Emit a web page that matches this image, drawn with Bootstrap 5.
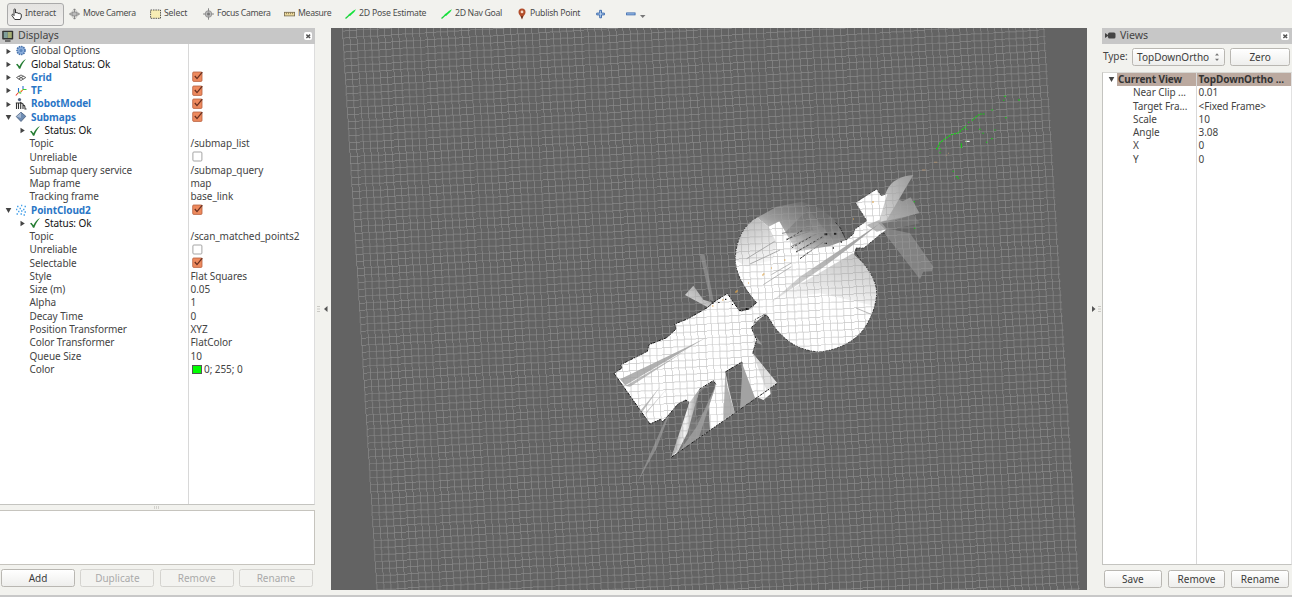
<!DOCTYPE html>
<html lang="en">
<head>
<meta charset="utf-8">
<title>RViz</title>
<link rel="stylesheet" href="https://cdn.jsdelivr.net/npm/bootstrap@5.3.0/dist/css/bootstrap.min.css">
<style>
body{width:1292px;height:597px;overflow:hidden;background:#f2f2ee;font-family:"Noto Sans","Open Sans",sans-serif;font-size:10px;line-height:13.28px;color:#444;letter-spacing:-.07px}
svg{display:block;flex:none}
.toolbar{height:28px;padding-left:7px;font-size:8.7px;letter-spacing:-.32px;color:#4c4c4c}
.tool{gap:3px;height:23px}
.tool svg{width:11px;height:12px}
.tool:nth-child(1){width:57px;border:1px solid #aaa;border-radius:3px;background:linear-gradient(#e4e3e1,#f0efed);margin-right:5px;padding-left:3px;gap:3px;letter-spacing:-.1px}
.tool:nth-child(2){width:81px}.tool:nth-child(3){width:53px;letter-spacing:-.15px}.tool:nth-child(4){width:81px}.tool:nth-child(5){width:61px}
.tool:nth-child(6){width:96px;letter-spacing:-.22px}.tool:nth-child(7){width:76px}.tool:nth-child(8){width:79px;gap:2px;letter-spacing:-.25px}.tool:nth-child(9){width:30px}
.leftdock{width:315px}
.rightdock{width:190px}
.dockhead{height:15.5px;background:#c7c7c7;font-size:10.6px;padding:0 3px 0 2px}
.closer{width:8.5px;height:8.5px;background:#fff;border-radius:2px}
.tree{background:#fff;border-right:1px solid #ddd;border-bottom:1px solid #c4c4c0;padding-top:.9px}
.trow{height:13.28px;white-space:nowrap}
.pname{width:188.5px;border-right:1px solid #d8d8d8;height:100%}
.pval{padding-left:2px}
.dark{color:#111}
.disp{color:#2a76c6;font-weight:700}
.exp{width:7px;margin-left:5px;margin-right:3px;height:7px}
.ic{width:12px;height:12px;margin-right:4px}
.ind1{padding-left:13.5px}
.ind1 .ic{margin-right:3.5px;margin-left:.5px}
.leaf{padding-left:29.5px}
.chk{width:11px;height:11px;margin-left:1px;margin-top:.5px}
.swatch{width:10px;height:9px;background:#0f0;border:1px solid #555;margin-left:1px;margin-right:2.5px}
.handle{height:5px}
.descr{height:55px;background:#fff;border:1px solid #c6c4be;border-left:0}
.btn.rvb{--bs-btn-padding-x:0;--bs-btn-padding-y:0;--bs-btn-font-size:10px;--bs-btn-line-height:1;--bs-btn-border-radius:2.5px;height:18px;color:#3c3c3c;border:1px solid #b9b7b2;background:linear-gradient(#fff,#eeeeec);letter-spacing:0}
.btn.rvb:disabled{color:#aaa;border-color:#d4d3cf;background:#f3f3f0;opacity:1}
.lbtns{height:30.5px;padding:4px 2px 0 1px;gap:5.2px}
.lbtns .btn{width:74.3px}
.rbtns{padding:5px 3px 0 2px;height:30px;gap:6px}
.rbtns .btn{width:58px}
.scene{width:756px;height:562px;background:#636363}
.typebar{height:28px;padding:0 2px 1px 1px;font-size:10px}
.typebox{width:93px;margin-left:4.5px;margin-right:5px}
.vtree{border-left:1px solid #c4c4c0;border-right:1px solid #e2e2e2;border-top:1px solid #d8d8d4}
.vtree .pname{width:93.5px;overflow:hidden}
.vtree .leaf{padding-left:30px}
.vtree .curname{width:79.5px;padding-left:1px}
.vtree .exp{margin-top:3px;margin-right:2px}
.vsel{background:#bba99f;color:#333;font-weight:700;height:13px}
.arrowcol{width:16px;padding-bottom:4px}
.arrowcol.narrow{width:15px}
.mainrow{height:567px}
.statusline{height:2px;background:#c8c8c8}
</style>
</head>
<body class="d-flex flex-column">
<svg width="0" height="0" class="position-absolute">
<defs>
<symbol id="right" viewBox="0 0 7 7"><path d="M1.5.8 5.800 3.500 1.500 6.200z" fill="#444"/></symbol>
<symbol id="down" viewBox="0 0 7 7"><path d="M.7 1h5.600L3.500 6z" fill="#444"/></symbol>
<symbol id="check" viewBox="0 0 12 12"><path d="M1 6.600 2.500 5.800 4.400 8.300C6 5 8 2.400 11 1 8.500 3.800 6.700 6.900 5.300 10.700H4C3.200 9 2.200 7.800 1 6.600z" fill="#257d33"/></symbol>
<symbol id="on" viewBox="0 0 11 11"><rect x=".7" y="1" width="9.300" height="9.400" rx="1" fill="#ee8a5e" stroke="#b5603f" stroke-width=".8"/><path d="M2.800 5 5 7.600 10.300 1.200" fill="none" stroke="#6a3020" stroke-width="1.300"/></symbol>
<symbol id="off" viewBox="0 0 11 11"><rect x=".9" y="1" width="9" height="9" rx="1" fill="#fff" stroke="#9b9b9b" stroke-width=".9"/></symbol>
<symbol id="x" viewBox="0 0 9 9"><path d="m2.500 2.800 4 3.600m0-3.600-4 3.600" stroke="#555" stroke-width="1.500"/></symbol>
<symbol id="arrow" viewBox="0 0 11 11"><path d="M.5 10 5.500 5.500" stroke="#1bd13a" stroke-width="1.300"/><path d="M3.500 6.300 8.200 2.300 11 .8 9.300 3.400 5 7.600z" fill="#14e23a"/></symbol>
</defs>
</svg>

<nav class="toolbar d-flex align-items-center">
<div class="tool d-flex align-items-center"><svg viewBox="0 0 11 12"><path d="M3 7V1.700C3 .6 4.500.6 4.500 1.700V5c0-.8 1.600-.8 1.600.2 0-.7 1.500-.6 1.500.4 0-.7 1.500-.5 1.500.5 0-.6 1.200-.5 1.200.5V9L9.200 11.500H3.800L1 7.600C.5 6.500 1.500 6 2 6.500L3 7.600z" fill="#fff" stroke="#222" stroke-width=".9"/></svg>Interact</div>
<div class="tool d-flex align-items-center"><svg viewBox="0 0 11 12"><path d="M5.500 1v10M.7 6h9.600M4 2.500 5.500.8 7 2.500M4 9.500l1.500 1.700L7 9.500M2 4.500.6 6 2 7.500M9 4.500 10.400 6 9 7.500" fill="none" stroke="#777" stroke-width=".8"/><rect x="3" y="4" width="5" height="4" fill="#bbb" stroke="#777" stroke-width=".7"/></svg>Move Camera</div>
<div class="tool d-flex align-items-center"><svg viewBox="0 0 11 12"><rect x=".6" y="2" width="9.900" height="8.300" fill="#f7edb4" stroke="#444" stroke-width=".9" stroke-dasharray="1.500 .9"/></svg>Select</div>
<div class="tool d-flex align-items-center"><svg viewBox="0 0 11 12"><circle cx="5.500" cy="6" r="3.300" fill="#bbb" stroke="#999"/><path d="M5.500.3V3.500M5.500 8.500v3.200M0 6h3M8 6h3" stroke="#888"/><circle cx="5.500" cy="6" r="1.500" fill="#777"/></svg>Focus Camera</div>
<div class="tool d-flex align-items-center"><svg viewBox="0 0 11 12"><rect x=".4" y="4.300" width="10.200" height="3.600" fill="#f0dda0" stroke="#75684a" stroke-width=".8"/><path d="M2.500 4.500v1.700m2-1.700v1.700m2-1.700v1.700m2-1.700v1.700" stroke="#75684a" stroke-width=".7"/></svg>Measure</div>
<div class="tool d-flex align-items-center"><svg><use href="#arrow"/></svg>2D Pose Estimate</div>
<div class="tool d-flex align-items-center"><svg><use href="#arrow"/></svg>2D Nav Goal</div>
<div class="tool d-flex align-items-center"><svg viewBox="0 0 11 12"><path d="M5 11.500C4.300 8 1.500 7 1.500 4a3.500 3.500 0 0 1 7 0C8.500 7 5.700 8 5 11.500z" fill="#b24e2c"/><path d="M4 8.300 5 11.500 6 8.300z" fill="#552418"/><circle cx="5" cy="3.900" r="1.400" fill="#f7d9c8"/></svg>Publish Point</div>
<div class="tool d-flex align-items-center"><svg viewBox="0 0 11 12"><path d="M3.700 2.300h1.800v2.800h2.900v1.800H5.500v2.900H3.700V6.900H.7V5.100h3z" fill="#b5cfee" stroke="#3363a8" stroke-width=".9"/></svg></div>
<div class="tool d-flex align-items-center"><svg viewBox="0 0 11 12"><rect x=".6" y="4.900" width="8.500" height="2" fill="#9fc0ea" stroke="#3363a8" stroke-width=".8"/></svg><svg viewBox="0 0 11 12"><path d="M0 7h5.500L2.700 10z" fill="#777"/></svg></div>
</nav>

<main class="mainrow d-flex">
<aside class="leftdock d-flex flex-column">
<div class="dockhead d-flex align-items-center"><svg width="12" height="12" viewBox="0 0 12 12" class="me-1"><rect x=".2" y=".8" width="11" height="8.700" rx=".8" fill="#333"/><rect x="1.700" y="2" width="4.100" height="6" fill="#7f9e9a"/><rect x="5.800" y="2" width="4" height="6" fill="#a6ae74"/><path d="M3 11h5.500" stroke="#333" stroke-width="1.200"/></svg><span class="flex-grow-1">Displays</span><svg class="closer" viewBox="0 0 9 9"><use href="#x"/></svg></div>
<section class="tree flex-grow-1 d-flex flex-column">
<div class="trow d-flex"><div class="pname d-flex align-items-center"><svg class="exp"><use href="#right"/></svg><svg class="ic" viewBox="0 0 12 12"><circle cx="6" cy="5.500" r="4" fill="#8aaddb" stroke="#4a74ac" stroke-width="1.600" stroke-dasharray="1.500 .8"/><circle cx="6" cy="5.500" r="1.500" fill="#5b86bd"/></svg>Global Options</div></div>
<div class="trow d-flex dark"><div class="pname d-flex align-items-center"><svg class="exp"><use href="#right"/></svg><svg class="ic"><use href="#check"/></svg>Global Status: Ok</div></div>
<div class="trow d-flex"><div class="pname d-flex align-items-center disp"><svg class="exp"><use href="#right"/></svg><svg class="ic" viewBox="0 0 12 12"><path d="M1.500 5.500 6 3l4.800 2.500L6 8.500zM3.700 4.300l4.800 2.700M8.500 4.200 3.700 7" fill="none" stroke="#555" stroke-width=".9"/></svg>Grid</div><div class="pval"><svg class="chk"><use href="#on"/></svg></div></div>
<div class="trow d-flex"><div class="pname d-flex align-items-center disp"><svg class="exp"><use href="#right"/></svg><svg class="ic" viewBox="0 0 12 12"><path d="M3.500 7.500V3M8 4.500V1" stroke="#2775d0" stroke-width="1.100"/><path d="M3.500 7.500.8 10.500M8 4.500 5.800 7" stroke="#f03a2c" stroke-width="1.100"/><path d="m3.500 7.500 2.700.6M8 4.500h3.500" stroke="#39d13c" stroke-width="1.200"/><path d="M3.500 7.500 8 4.500" stroke="#e2c535" stroke-width=".8"/></svg>TF</div><div class="pval"><svg class="chk"><use href="#on"/></svg></div></div>
<div class="trow d-flex"><div class="pname d-flex align-items-center disp"><svg class="exp"><use href="#right"/></svg><svg class="ic" viewBox="0 0 12 12"><circle cx="4.500" cy="1.600" r="1.600" fill="#53617e"/><path d="M1.500 11V5M3.500 11V4.500M5.700 11V4.500L8 6v5M8 7.500c2-.5 2 1 2 3.500h1.500M.8 5h6" fill="none" stroke="#333" stroke-width="1.100"/></svg>RobotModel</div><div class="pval"><svg class="chk"><use href="#on"/></svg></div></div>
<div class="trow d-flex"><div class="pname d-flex align-items-center disp"><svg class="exp"><use href="#down"/></svg><svg class="ic" viewBox="0 0 12 12"><path d="M6 1.200 10.800 5.300 6 10.500 1.200 5.500z" fill="#6e8cb3" stroke="#455a78" stroke-width=".8"/><path d="M6 1.500 1.500 5.500 6 7z" fill="#a5b8d2"/></svg>Submaps</div><div class="pval"><svg class="chk"><use href="#on"/></svg></div></div>
<div class="trow d-flex dark"><div class="pname d-flex align-items-center ind1"><svg class="exp"><use href="#right"/></svg><svg class="ic"><use href="#check"/></svg>Status: Ok</div></div>
<div class="trow d-flex"><div class="pname leaf">Topic</div><div class="pval">/submap_list</div></div>
<div class="trow d-flex"><div class="pname leaf">Unreliable</div><div class="pval"><svg class="chk"><use href="#off"/></svg></div></div>
<div class="trow d-flex"><div class="pname leaf">Submap query service</div><div class="pval">/submap_query</div></div>
<div class="trow d-flex"><div class="pname leaf">Map frame</div><div class="pval">map</div></div>
<div class="trow d-flex"><div class="pname leaf">Tracking frame</div><div class="pval">base_link</div></div>
<div class="trow d-flex"><div class="pname d-flex align-items-center disp"><svg class="exp"><use href="#down"/></svg><svg class="ic" viewBox="0 0 12 12"><path d="M2 2.500h1.500M6 1.500h1.300M9.500 2.500H11M1 5.500h1.300M4.500 4.500H6M8 5.500h1.500M3 7.500h1.500M6 7h1.500M9.500 8H11M1.500 10H3M5.500 10H7M8.500 11H10" stroke="#4aa3ea" stroke-width="1.400"/></svg>PointCloud2</div><div class="pval"><svg class="chk"><use href="#on"/></svg></div></div>
<div class="trow d-flex dark"><div class="pname d-flex align-items-center ind1"><svg class="exp"><use href="#right"/></svg><svg class="ic"><use href="#check"/></svg>Status: Ok</div></div>
<div class="trow d-flex"><div class="pname leaf">Topic</div><div class="pval">/scan_matched_points2</div></div>
<div class="trow d-flex"><div class="pname leaf">Unreliable</div><div class="pval"><svg class="chk"><use href="#off"/></svg></div></div>
<div class="trow d-flex"><div class="pname leaf">Selectable</div><div class="pval"><svg class="chk"><use href="#on"/></svg></div></div>
<div class="trow d-flex"><div class="pname leaf">Style</div><div class="pval">Flat Squares</div></div>
<div class="trow d-flex"><div class="pname leaf">Size (m)</div><div class="pval">0.05</div></div>
<div class="trow d-flex"><div class="pname leaf">Alpha</div><div class="pval">1</div></div>
<div class="trow d-flex"><div class="pname leaf">Decay Time</div><div class="pval">0</div></div>
<div class="trow d-flex"><div class="pname leaf">Position Transformer</div><div class="pval">XYZ</div></div>
<div class="trow d-flex"><div class="pname leaf">Color Transformer</div><div class="pval">FlatColor</div></div>
<div class="trow d-flex"><div class="pname leaf">Queue Size</div><div class="pval">10</div></div>
<div class="trow d-flex"><div class="pname leaf">Color</div><div class="pval d-flex align-items-center"><span class="swatch"></span>0; 255; 0</div></div>
<div class="pname flex-grow-1"></div>
</section>
<div class="handle d-flex justify-content-center align-items-center"><svg width="7" height="3"><path d="M.5 0v3m2-3v3m2-3v3" stroke="#d3d2cd"/></svg></div>
<div class="descr"></div>
<div class="lbtns d-flex"><button class="btn rvb">Add</button><button class="btn rvb" disabled>Duplicate</button><button class="btn rvb" disabled>Remove</button><button class="btn rvb" disabled>Rename</button></div>
</aside>

<div class="arrowcol d-flex align-items-center justify-content-center"><svg width="14" height="9" viewBox="0 0 14 9"><path d="M1 1.500h3m-3 2.500h3m-3 2.500h3" stroke="#c0bfba" stroke-width=".8"/><path d="M11.500 1v6L8 4z" fill="#555"/></svg></div>

<svg class="scene" viewBox="331 28 756 562">
<defs>
<linearGradient id="fade" x1="0" y1="0" x2="0" y2="1"><stop offset="0" stop-color="#fff"/><stop offset="1" stop-color="#fff" stop-opacity=".35"/></linearGradient>
<linearGradient id="spoke" x1=".7" y1="0" x2=".3" y2="1"><stop offset="0" stop-color="#fff"/><stop offset=".5" stop-color="#eee"/><stop offset="1" stop-color="#aaa"/></linearGradient>
<linearGradient id="rib" x1="0" y1=".4" x2="1" y2=".6"><stop offset="0" stop-color="#8a8a8a"/><stop offset=".5" stop-color="#f4f4f4"/><stop offset="1" stop-color="#7a7a7a"/></linearGradient>
<linearGradient id="haze" gradientUnits="userSpaceOnUse" x1="220" y1="275" x2="290" y2="130"><stop offset="0" stop-color="#eee"/><stop offset=".35" stop-color="#aaa" stop-opacity=".85"/><stop offset=".7" stop-color="#888" stop-opacity=".75"/><stop offset="1" stop-color="#777" stop-opacity=".3"/></linearGradient>
<linearGradient id="shade" x1=".8" y1="0" x2=".4" y2="1"><stop offset="0" stop-color="#c4c4c4"/><stop offset=".6" stop-color="#e4e4e4"/><stop offset="1" stop-color="#fff"/></linearGradient>
<linearGradient id="beam" x1="0" y1="1" x2="1" y2="0"><stop offset="0" stop-color="#ccc" stop-opacity=".5"/><stop offset=".5" stop-color="#b4b4b4"/><stop offset="1" stop-color="#999"/></linearGradient>
<linearGradient id="wing" x1="0" y1="1" x2="1" y2="0"><stop offset="0" stop-color="#e0e0e0"/><stop offset="1" stop-color="#999"/></linearGradient>
<linearGradient id="leftlobe" gradientUnits="userSpaceOnUse" x1="100" y1="170" x2="160" y2="320"><stop offset="0" stop-color="#bbb"/><stop offset=".6" stop-color="#e8e8e8"/><stop offset="1" stop-color="#fff"/></linearGradient>
</defs>
<!-- room at the lower left -->
<g transform="translate(600 240) scale(.33333)">
<path d="M112 728 200 530l10-12-40 106z" fill="#8a8a8a"/>
<path d="M255 165 280 137l30 42 32 10-20 12z" fill="url(#wing)"/>
<path d="m300 42 14 4 28 142-12-10z" fill="#858585"/>
<path d="M450 262 486 314l-18-6z" fill="#999"/>
<path d="M42 400 66 384 62 374 142 334 147 314 200 293 228 267 224 252 262 237 322 203 340 187 382 160 418 212 444 208 472 186 500 224 468 240 465 254 454 262 470 300 458 340 532 430 510 446 512 462 490 480 472 472 406 518 214 652 250 560 268 488 258 480 234 492 188 546 182 538 150 552z" fill="#fff"/>
<path d="M268 488 298 448 262 600 214 652z" fill="url(#rib)"/>
<path d="M298 450 340 422 348 434 326 500 330 570 230 641 262 580z" fill="#777"/>
<path d="M296 460 340 424 345 440 318 510 284 545z" fill="#646464"/>
<path d="M348 434 296 595 236 637 290 560z" fill="#aaa" opacity=".65"/>
<path d="M348 420 376 396 404 518 330 570z" fill="url(#fade)"/>
<path d="M376 396 382 440 404 518 370 540z" fill="#9c9c9c" opacity=".8"/>
<path d="M376 396 384 390 425 366 428 374 424 505 404 518 385 440z" fill="#666"/>
<path d="m428 374 38 102-46 32z" fill="#a2a2a2"/>
<path d="M458 340 532 430 500 452z" fill="#ccc" opacity=".6"/>
<path d="M60 418 280 312 320 292 76 436z" fill="#b0b0b0"/>
<path d="M76 438 260 330l-170 110zM124 520l58-82-64 78zM132 528l74-88-64 72z" fill="#bbb"/>
<path d="M42 400 66 384 62 374 142 334 147 314 200 293 228 267 224 252 262 237 322 203 340 187 382 160 418 212 444 208 472 186M500 224 468 240 465 254 454 262 470 300 458 340M42 400 150 552 182 538 188 546 234 492 258 480 268 488M298 448 340 422 348 434M376 396 425 366 428 374M532 430 214 652" fill="none" stroke="#161616" stroke-width="3" stroke-dasharray="9 3 4 2"/>
<path d="M335 185h6v6h-6zM375 176h4v4h-4zM354 186h5v3h-5zM396 192h3v3h-3zM436 204h7v6h-7z" fill="#111"/>
</g>
<!-- round hall and the passage to the upper right -->
<g transform="translate(720 160) scale(.33333)">
<path d="M110 174 170 140 245 125 300 145 345 180 378 240 340 275 230 280z" fill="url(#haze)"/>
<path d="m190 222 70-70 20 60zM250 130l90 110-20-90z" fill="#6a6a6a" opacity=".4"/>
<path d="M500 205 490 215 600 358 610 335 636 334 640 320 570 220z" fill="#828282"/>
<path d="m472 192 28-86 48 18 24-12 26 46-96 30z" fill="url(#wing)" opacity=".7"/>
<path d="M465 190 500 92C515 60 545 48 580 45L500 180z" fill="url(#wing)"/>
<path d="M406 128 470 87 484 108 502 102 478 180 500 208 485 220 432 264 408 264 398 290 430 310C455 340 470 370 470 402 466 450 450 480 428 512 400 545 360 568 300 576 260 574 220 560 190 530 155 500 152 475 136 462L104 490 100 440 110 428C75 390 46 340 46 300 46 250 65 200 110 172L146 200 178 184 230 275 330 258 378 240 400 222 404 208 440 182z" fill="#fff"/>
<path d="M46 300C46 250 65 200 110 172L146 200 170 250 160 300 80 320z" fill="url(#leftlobe)"/>
<path d="M160 420 398 280 430 310C455 340 470 370 470 402 464 430 466 440 454 436L300 400z" fill="url(#shade)"/>
<path d="M150 430 240 350 480 190 390 262 310 322 230 376z" fill="url(#beam)"/>
<path d="M474 188 580 165 600 190 500 212z" fill="#7c7c7c" opacity=".7"/>
<path d="M440 195 478 180 500 208 470 215z" fill="#999" opacity=".7"/>
<path d="m186 220 108-20M198 238l102-34M213 260l100-50M228 276l90-48M240 296l70-50" stroke="#888" stroke-width="3" stroke-dasharray="22 3"/>
<path d="M80 296l84-52M90 312l90-42" stroke="#aaa" stroke-width="3"/>
<path d="M200 240 246 212M215 264l60-35M228 276l80-46M240 296l24-18" stroke="#333" stroke-width="2.500" stroke-dasharray="7 5"/>
<path d="m130 374 84-54m-60 24 60-35M408 444l48 20" stroke="#bbb" stroke-width="3"/>
<path d="M313 220h9v6h-9zM342 218h7v6h-7zM314 248h7v4h-7zM338 262h4v4h-4zM362 244h4v4h-4z" fill="#222"/>
<path d="M110 172C65 200 46 250 46 300 46 340 75 390 110 428L92 446 60 454M104 490 106 478 136 462C152 475 155 500 190 530 220 560 260 574 300 576 360 568 400 545 428 512 450 480 466 450 470 402 470 370 455 340 430 310L408 280 408 264 432 264 485 220 494 220M378 240 400 222 404 208 440 182 406 128 470 87 484 108M378 240 362 205 345 185" fill="none" stroke="#222" stroke-width="2.500" stroke-dasharray="8 3 4 3"/>
</g>
<!-- the world grid -->
<path id="gridpath" fill="#a4a4a4" fill-opacity=".6"/>
<!-- scan points -->
<g transform="translate(900 80) scale(.33333)" fill="none" stroke-width="3.200">
<path d="M110 208 120 188 136 176 154 164 176 158 190 146 200 136" stroke="#12dd12" stroke-dasharray="6 3"/>
<path d="M216 122 226 112 240 102 256 102" stroke="#12cf12" stroke-dasharray="5 3"/>
<path d="M184 190v14M108 206h5M120 208h3M118 218h4M204 127h4M198 148h4M237 148h5M247 160h4M258 187h4M274 90h5M312 49h6M309 61h4M354 60h6M315 113h5M168 290h6M173 295h4M158 274h4M41 365h4M42 445h4M283 150h4M273 176h5" stroke="#1c1"/>
<path d="M195 184h4" stroke="#8d8"/><path d="M200 184h9" stroke="#fff"/>
<path d="M144 220h3M138 226h3M102 247h10M66 270h11" stroke="#a98e72"/>
</g>
<path d="M735 292h2m-1-1h2M748 283h1M762 275h1.500M763 274h1.500M784 260h1.500M872 202h2M712 306h1.500M722 300h1.500M853 219h1M771 268h1" stroke="#e0a54a"/>
</svg>

<div class="arrowcol narrow d-flex align-items-center justify-content-center"><svg width="14" height="9" viewBox="0 0 14 9"><path d="M10 1.500h3m-3 2.500h3m-3 2.500h3" stroke="#c0bfba" stroke-width=".8"/><path d="M4 1v6L7.500 4z" fill="#555"/></svg></div>

<aside class="rightdock d-flex flex-column">
<div class="dockhead d-flex align-items-center"><svg width="12" height="9" viewBox="0 0 12 9" class="me-1"><rect x="4" y="1.500" width="7.500" height="6" rx="1.500" fill="#444"/><path d="M1 2v5l3-2V4z" fill="#444"/></svg><span class="flex-grow-1">Views</span><svg class="closer" viewBox="0 0 9 9"><use href="#x"/></svg></div>
<div class="typebar d-flex align-items-center">Type:<button class="btn rvb typebox d-flex align-items-center justify-content-between px-1">TopDownOrtho<svg width="6" height="10" viewBox="0 0 6 10"><path d="M1 3.500h4L3 1.200zM1 6.800h4L3 9z" fill="#777"/></svg></button><button class="btn rvb flex-grow-1">Zero</button></div>
<section class="tree vtree d-flex flex-column flex-grow-1">
<div class="trow d-flex"><svg class="exp"><use href="#down"/></svg><div class="vsel d-flex flex-grow-1"><div class="pname curname">Current View</div><div class="pval">TopDownOrtho ...</div></div></div>
<div class="trow d-flex"><div class="pname leaf">Near Clip ...</div><div class="pval">0.01</div></div>
<div class="trow d-flex"><div class="pname leaf">Target Fra...</div><div class="pval">&lt;Fixed Frame&gt;</div></div>
<div class="trow d-flex"><div class="pname leaf">Scale</div><div class="pval">10</div></div>
<div class="trow d-flex"><div class="pname leaf">Angle</div><div class="pval">3.08</div></div>
<div class="trow d-flex"><div class="pname leaf">X</div><div class="pval">0</div></div>
<div class="trow d-flex"><div class="pname leaf">Y</div><div class="pval">0</div></div>
<div class="pname flex-grow-1"></div>
</section>
<div class="rbtns d-flex"><button class="btn rvb">Save</button><button class="btn rvb">Remove</button><button class="btn rvb">Rename</button></div>
</aside>
</main>
<footer class="statusline"></footer>
<script src="https://cdn.jsdelivr.net/npm/bootstrap@5.3.0/dist/js/bootstrap.bundle.min.js"></script>
<script>
// 100-cell grid, rotated by the view angle; every line is stepped to whole scene units of U px.
const U = 0.7, T = Math.tan(Math.PI - 3.08), PITCH = 7 / Math.cos(Math.PI - 3.08);
const snap = v => Math.floor(v / U) * U;
const left = y => 342.3 + (y - 28) * T;
let d = '';
for (let i = 0; i <= 100; i++) {
  const x0 = left(28) + i * PITCH;
  // where the line crosses from one unit column to the next
  let y = 28, x = snap(x0);
  while (y < 590) {
    const next = Math.min(590, 28 + (x + U - x0) / T);
    if (next > y) { d += `M${x.toFixed(2)} ${y.toFixed(2)}h${U}V${next.toFixed(2)}h-${U}z`; y = next; }
    x += U;
  }
}
for (let j = -1; j < 88; j++) {
  const yAt = x => 37.7 + j * PITCH - (x - 347) * T;
  let x = left(yAt(347));
  const end = x + 700;
  let y = snap(yAt(x));
  while (x < end) {
    const next = Math.min(end, 347 + (37.7 + j * PITCH - y) / T);
    if (next > x) { if (y > 27 && y < 590) d += `M${x.toFixed(2)} ${y.toFixed(2)}H${next.toFixed(2)}v${U}H${x.toFixed(2)}z`; x = next; }
    y -= U;
  }
}
document.getElementById('gridpath').setAttribute('d', d);
</script>
</body>
</html>
